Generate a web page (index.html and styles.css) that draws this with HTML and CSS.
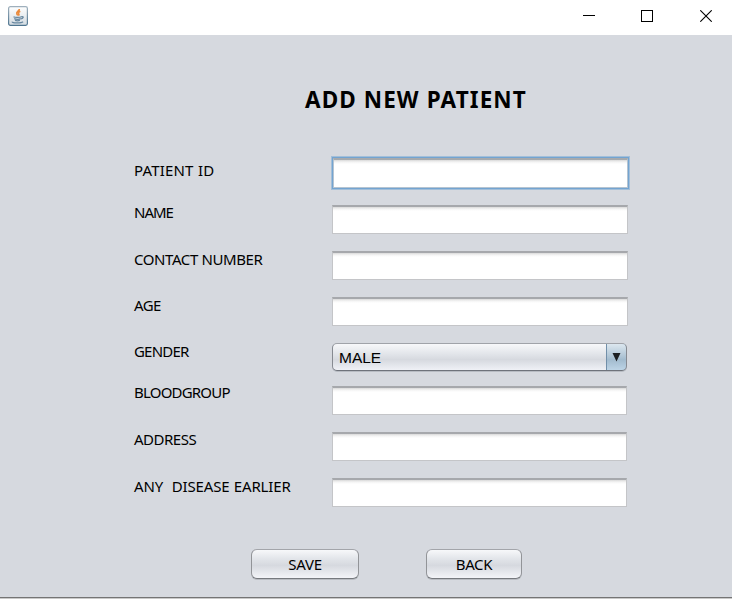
FILE: index.html
```
<!DOCTYPE html>
<html lang="en">
<head>
<meta charset="utf-8">
<title>Add New Patient</title>
<link rel="stylesheet" href="styles.css">
</head>
<body>
<div class="window">
  <header class="titlebar">
    <svg class="app-icon" width="20" height="20" viewBox="0 0 20 20" fill="none">
      <defs>
        <linearGradient id="tile" x1="0" y1="0" x2="0" y2="1"><stop offset="0" stop-color="#ffffff"/><stop offset="1" stop-color="#d3dbe1"/></linearGradient>
        <linearGradient id="edge" x1="0" y1="0" x2="0" y2="1"><stop offset="0" stop-color="#9fb0bd"/><stop offset="1" stop-color="#4e7590"/></linearGradient>
      </defs>
      <rect x=".6" y=".6" width="18.8" height="18.8" rx="1.8" fill="url(#tile)" stroke="url(#edge)" stroke-width="1.2"/>
      <path d="M11.300 3c.3 2-3.300 2.600-2.500 4.700.2.700.8 1.200 1 1.800M12.300 5.300c-2 .8-2.200 1.700-1.500 2.600.4.600.2 1.200-.4 1.700" stroke="#eb8a3c" stroke-width="1.600"/>
      <path d="M5.500 10.800c1.300.8 6.500.8 8 0M6.200 12.700c1.600.7 5 .7 6.600 0M7 14.400c1.400.5 3.500.5 4.900 0M13.500 10.600c2.600-.5 2 2-.4 2.300M4.500 15.700c-1.500 1.500 9 1.700 10.500 0" stroke="#66869f" stroke-width="1.300"/>
    </svg>
    <div class="window-controls">
      <svg width="12" height="12" viewBox="0 0 12 12" shape-rendering="crispEdges"><path d="M0 5.500h12" stroke="#000"/></svg>
      <svg width="12" height="12" viewBox="0 0 12 12" shape-rendering="crispEdges"><path d="M.5.5h11v11H.5z" fill="none" stroke="#000"/></svg>
      <svg width="12" height="12" viewBox="0 0 12 12"><path d="M.3.3l11.400 11.400M11.700.3L.3 11.700" stroke="#000" stroke-width="1.100"/></svg>
    </div>
  </header>
  <main class="content">
    <h1>ADD NEW PATIENT</h1>
    <form class="form">
      <label class="l-id" for="pid">PATIENT ID</label><input id="pid" class="field focused">
      <label class="l-name" for="name">NAME</label><input id="name" class="field">
      <label class="l-contact" for="contact">CONTACT NUMBER</label><input id="contact" class="field">
      <label class="l-age" for="age">AGE</label><input id="age" class="field">
      <label class="l-gender">GENDER</label>
      <div class="select"><span class="value">MALE</span><span class="arrow"><svg width="9" height="9" viewBox="0 0 9 9"><path d="M.5 0h8L4.500 8.500z" fill="#1c1f22"/></svg></span></div>
      <label class="l-blood" for="blood">BLOODGROUP</label><input id="blood" class="field narrow">
      <label class="l-address" for="address">ADDRESS</label><input id="address" class="field narrow">
      <label class="l-disease" for="disease">ANY&nbsp; DISEASE EARLIER</label><input id="disease" class="field narrow">
    </form>
    <div class="actions">
      <button class="save" type="button">SAVE</button>
      <button class="back" type="button">BACK</button>
    </div>
  </main>
</div>
</body>
</html>
```
FILE: styles.css
```
* { box-sizing: border-box; }
body { margin: 0; font: 15px/18px "Noto Sans", "Liberation Sans", sans-serif; color: #000; }
.window { width: 732px; height: 599px; overflow: hidden; display: flex; flex-direction: column; background: #d6d9df; border-bottom: 1px solid #c9c9c9; }
.titlebar { height: 35px; flex: none; display: flex; justify-content: space-between; padding: 6px 20px 0 8px; background: #fff; }
.window-controls { display: flex; gap: 46px; padding-top: 4px; }
.window-controls svg:last-child { margin-left: 1px; }
.content { flex: 1; border-bottom: 1px solid #747474; }
h1 { margin: 51px 0 0 305px; font-size: 22.500px; line-height: 28px; font-weight: 700; white-space: nowrap; letter-spacing: 1.100px; }
.form { display: grid; grid-template-columns: 198px 296px; grid-template-rows: 46px 46px 46px 46px 43px 46px 46px 30px; margin: 45px 0 0 134px; align-items: start; }
label { white-space: pre; letter-spacing: -.4px; margin-top: -1px; }
.l-id { margin-top: 2px; letter-spacing: .15px; word-spacing: .5px; }
.l-name { margin-top: -2px; letter-spacing: -1px; }
.l-age { letter-spacing: -.6px; }
.l-gender { letter-spacing: -.8px; }
.l-blood { margin-top: -3px; letter-spacing: -.8px; }
.l-address { margin-top: -2px; letter-spacing: -.5px; }
.l-disease { letter-spacing: -.15px; word-spacing: .6px; }
.field { width: 296px; height: 29px; margin: 0; padding: 0 6px; font: inherit; outline: 0; border: 1px solid #c4c5c8; border-top: 2px solid #a6a8ac; border-radius: 0; background: linear-gradient(#d9d9d9, #f4f4f4 2px, #fff 4px); }
.narrow { width: 295px; }
.focused { width: 295px; height: 30px; margin: -1px 0 0 1px; border-color: #a6aaae #b6c4d1 #b6c4d1; box-shadow: 0 0 0 1px #73a4d1, 0 0 0 2px #a3bfd9; }
.select { width: 295px; height: 28px; display: flex; border: 1px solid; border-color: #a0a3a9 #868a91 #6f737b; border-radius: 5px; background: linear-gradient(#f7f8fa, #e1e4e9 40%, #d6d9df 60%, #eff1f6); box-shadow: 0 1px #b8bcc3; overflow: hidden; }
.value { flex: 1; padding: 5px 0 0 6px; font: 15.500px/18px "Liberation Sans", Arial, sans-serif; }
.arrow { width: 21px; margin: -1px; border: 1px solid; border-color: #7c9ab3 #435d73 #4b6479 #718fa9; border-radius: 0 5px 5px 0; background: linear-gradient(#dce7ef, #b2c7d7 45%, #a2bbce 60%, #bdd4e6); display: flex; justify-content: center; padding-top: 9px; }
.actions { display: flex; gap: 67px; margin: 41px 0 0 251px; }
button { height: 30px; padding: 0 0 1px; font: inherit; letter-spacing: -.3px; color: #000; border: 1.500px solid; border-color: #a3a5aa #929498 #76797e; border-radius: 6px; background: linear-gradient(#f7f8fa, #e0e3e8 35%, #d6d9df 55%, #f3f4f8); box-shadow: 0 1px #b9bcc2; }
.save { width: 108px; }
.back { width: 96px; }
```
